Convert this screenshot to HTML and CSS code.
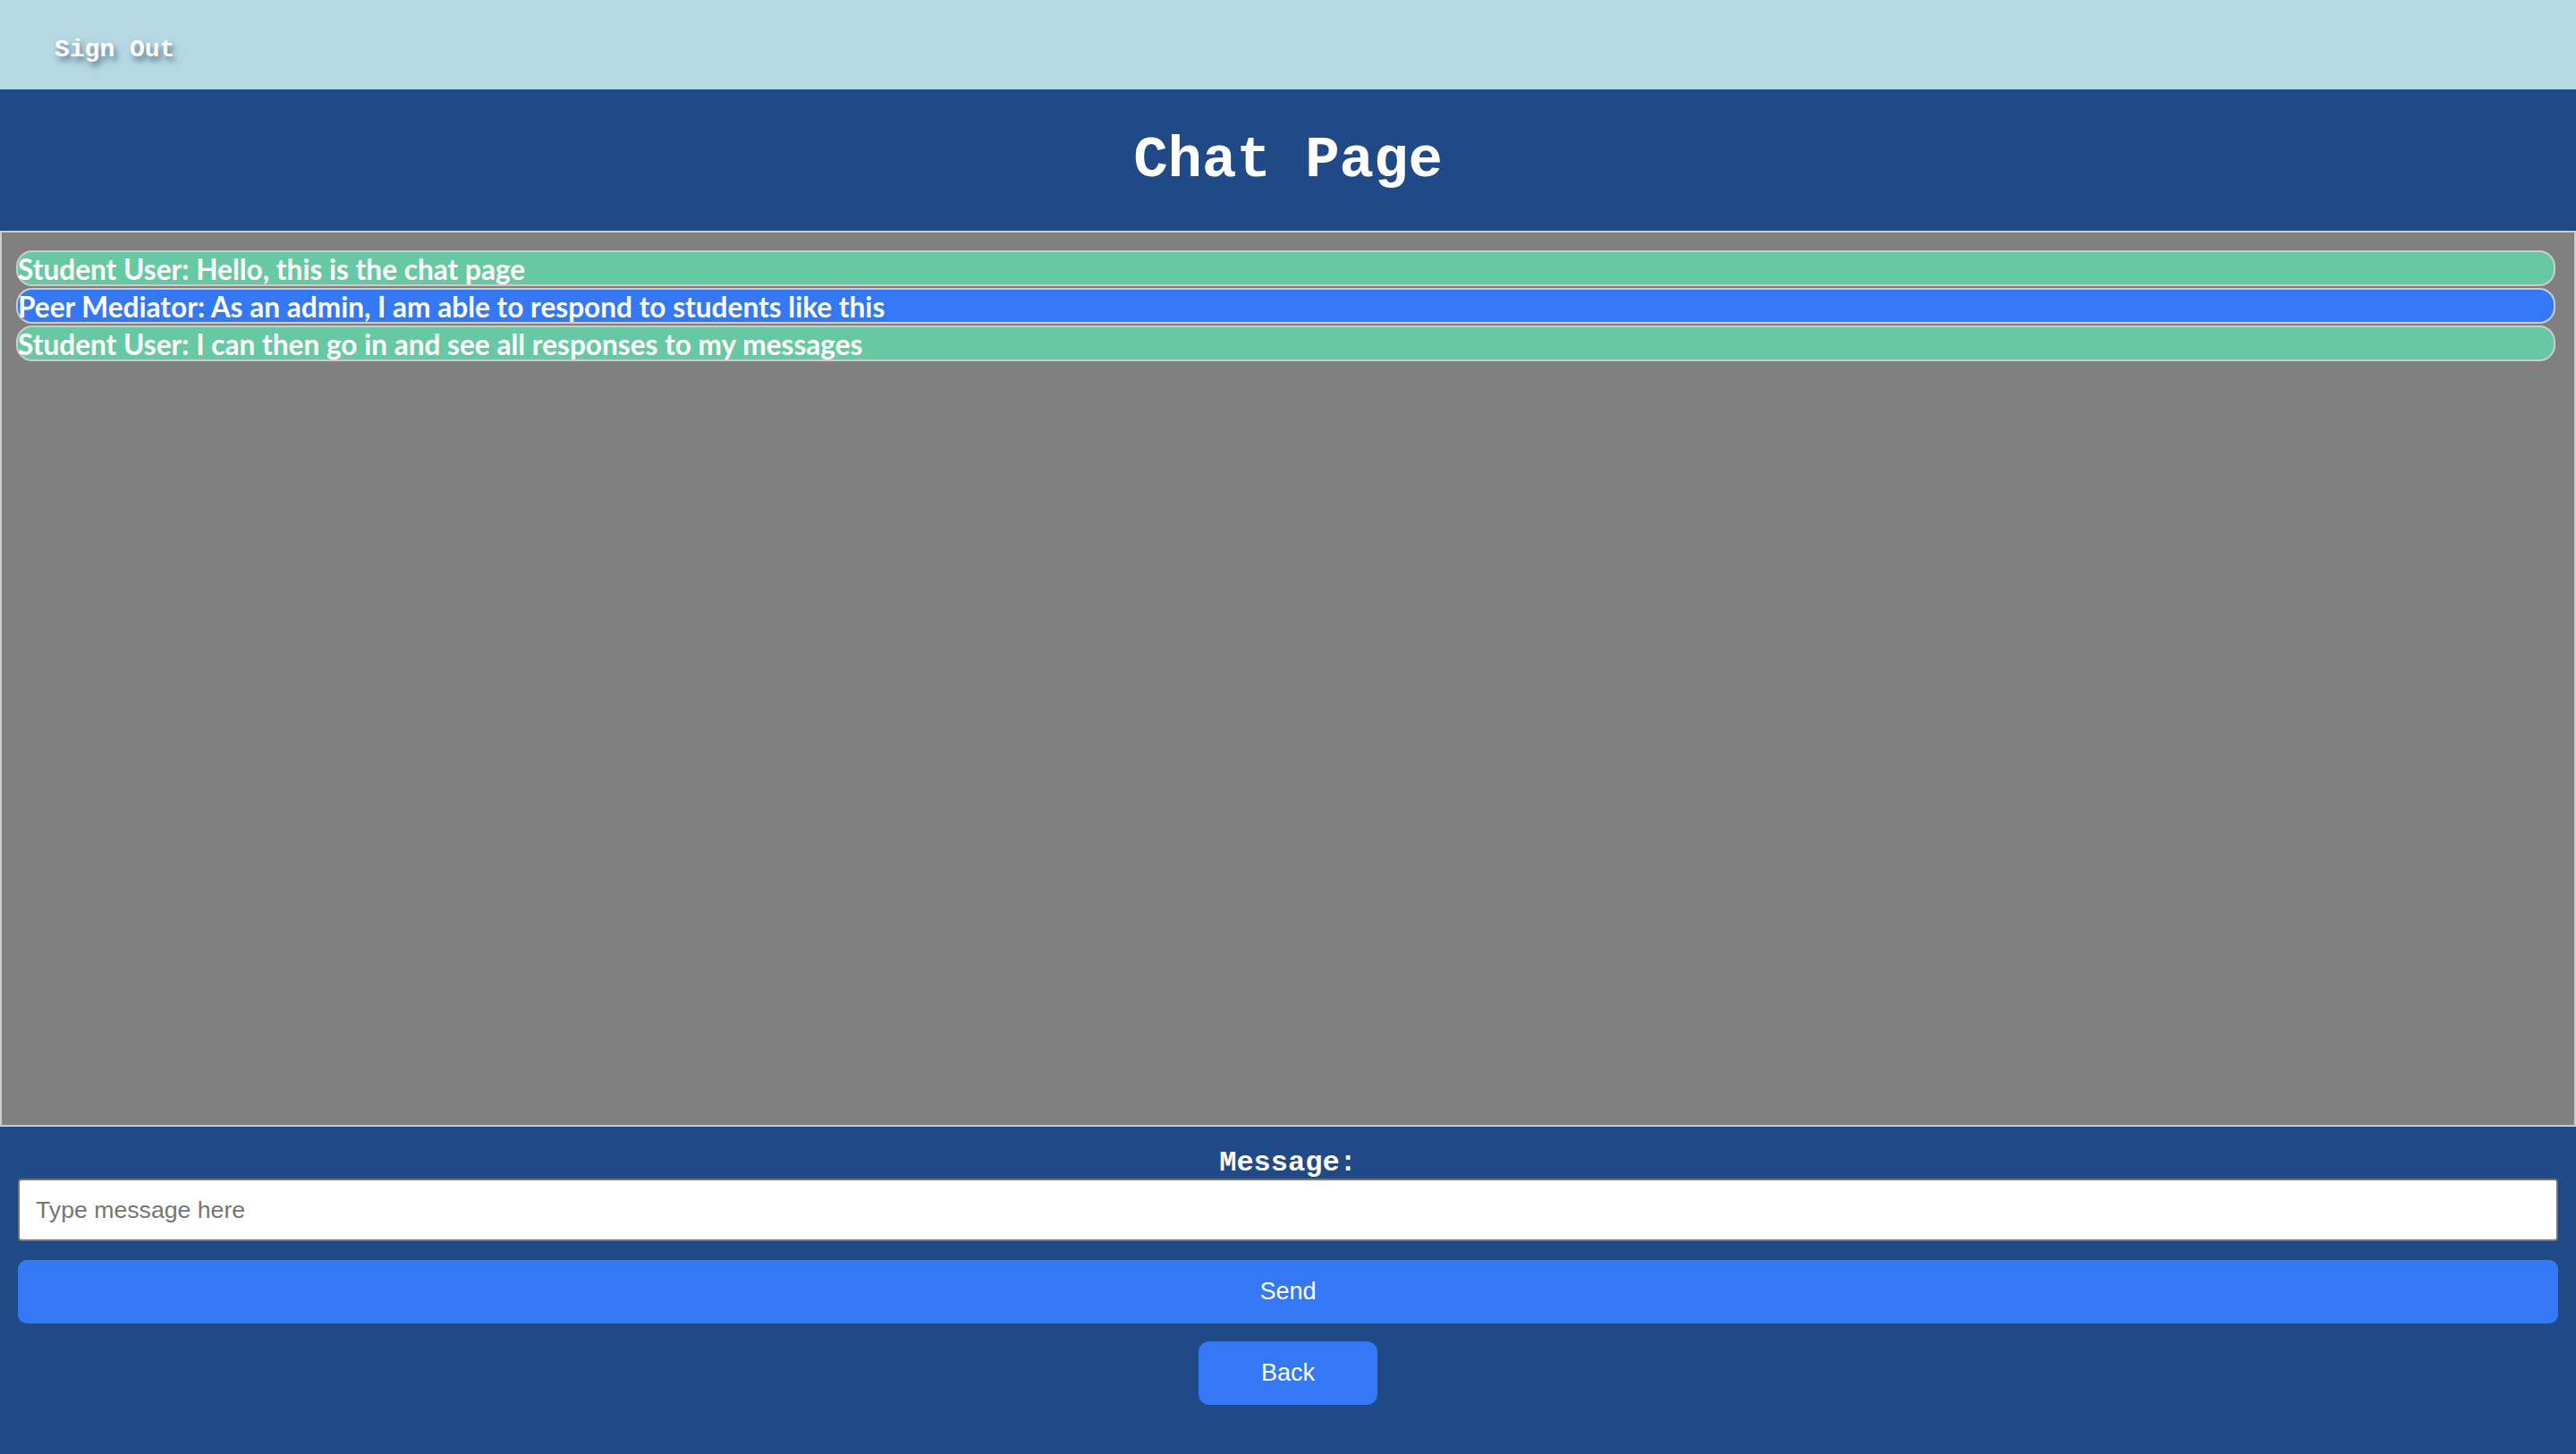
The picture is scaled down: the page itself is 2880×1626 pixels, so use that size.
FILE: index.html
```html
<!DOCTYPE html>
<html lang="en">
<head>
<meta charset="utf-8">
<title>Chat Page</title>
<link rel="stylesheet" href="styles.css">
</head>
<body>
<div class="topbar"><a class="signout" href="#">Sign Out</a></div>
<header class="header"><h1 class="title">Chat Page</h1></header>
<section class="chatbox">
  <div class="msg msg-student">Student User: Hello, this is the chat page</div>
  <div class="msg msg-mediator">Peer Mediator: As an admin, I am able to respond to students like this</div>
  <div class="msg msg-student">Student User: I can then go in and see all responses to my messages</div>
</section>
<section class="composer">
  <label class="label" for="msg">Message:</label>
  <input class="input" id="msg" type="text" placeholder="Type message here">
  <button class="send" type="button">Send</button>
  <button class="back" type="button">Back</button>
</section>
</body>
</html>
```
FILE: styles.css
```css
html, body {
  margin: 0;
  padding: 0;
  background: #204a87;
}
.topbar {
  height: 100px;
  background: #b5d8e4;
  display: flex;
  align-items: center;
  padding-left: 61px;
  padding-top: 11px;
  box-sizing: border-box;
}
.signout {
  font-family: "Liberation Mono", "Courier New", monospace;
  font-weight: bold;
  font-size: 28px;
  color: #ffffff;
  text-decoration: none;
  text-shadow: 3px 5px 6px rgba(60, 90, 110, 0.75);
}
.header {
  height: 158px;
  background: #204a87;
  display: flex;
  align-items: center;
  justify-content: center;
}
.title {
  margin: 0;
  font-family: "Liberation Mono", "Courier New", monospace;
  font-weight: bold;
  font-size: 64px;
  color: #ffffff;
  padding-top: 2px;
}
.chatbox {
  height: 1002px;
  box-sizing: border-box;
  border: 2px solid #cccccc;
  background: #808080;
  padding: 20px 21px 0 16px;
  display: flex;
  flex-direction: column;
  gap: 2px;
}
.msg {
  height: 40px;
  box-sizing: border-box;
  border: 2px solid #cccccc;
  border-radius: 18px;
  color: #ffffff;
  font-family: "Lato", "Open Sans", sans-serif;
  font-weight: bold;
  font-size: 31.6px;
  line-height: 38px;
  padding-left: 0;
  white-space: nowrap;
}
.msg-student { background: #67c8a4; }
.msg-mediator { background: #3478f6; }
.composer {
  display: flex;
  flex-direction: column;
  align-items: center;
  padding: 23px 20px 0 20px;
}
.label {
  font-family: "Liberation Mono", "Courier New", monospace;
  font-weight: bold;
  font-size: 32px;
  color: #ffffff;
  line-height: 36px;
  height: 35px;
}
.input {
  width: 100%;
  height: 70px;
  box-sizing: border-box;
  border: 2px solid #767676;
  border-radius: 4px;
  background: #ffffff;
  padding: 0 18px;
  font-family: "Liberation Sans", Arial, sans-serif;
  font-size: 26.67px;
  color: #000;
  outline: none;
}
.input::placeholder { color: #757575; }
.send {
  margin-top: 21px;
  width: 100%;
  height: 71px;
  border: none;
  border-radius: 10px;
  background: #3478f6;
  color: #ffffff;
  font-family: "Liberation Sans", Arial, sans-serif;
  font-size: 27px;
}
.back {
  margin-top: 20px;
  width: 200px;
  height: 71px;
  border: none;
  border-radius: 12px;
  background: #3478f6;
  color: #ffffff;
  font-family: "Liberation Sans", Arial, sans-serif;
  font-size: 27px;
}
```
